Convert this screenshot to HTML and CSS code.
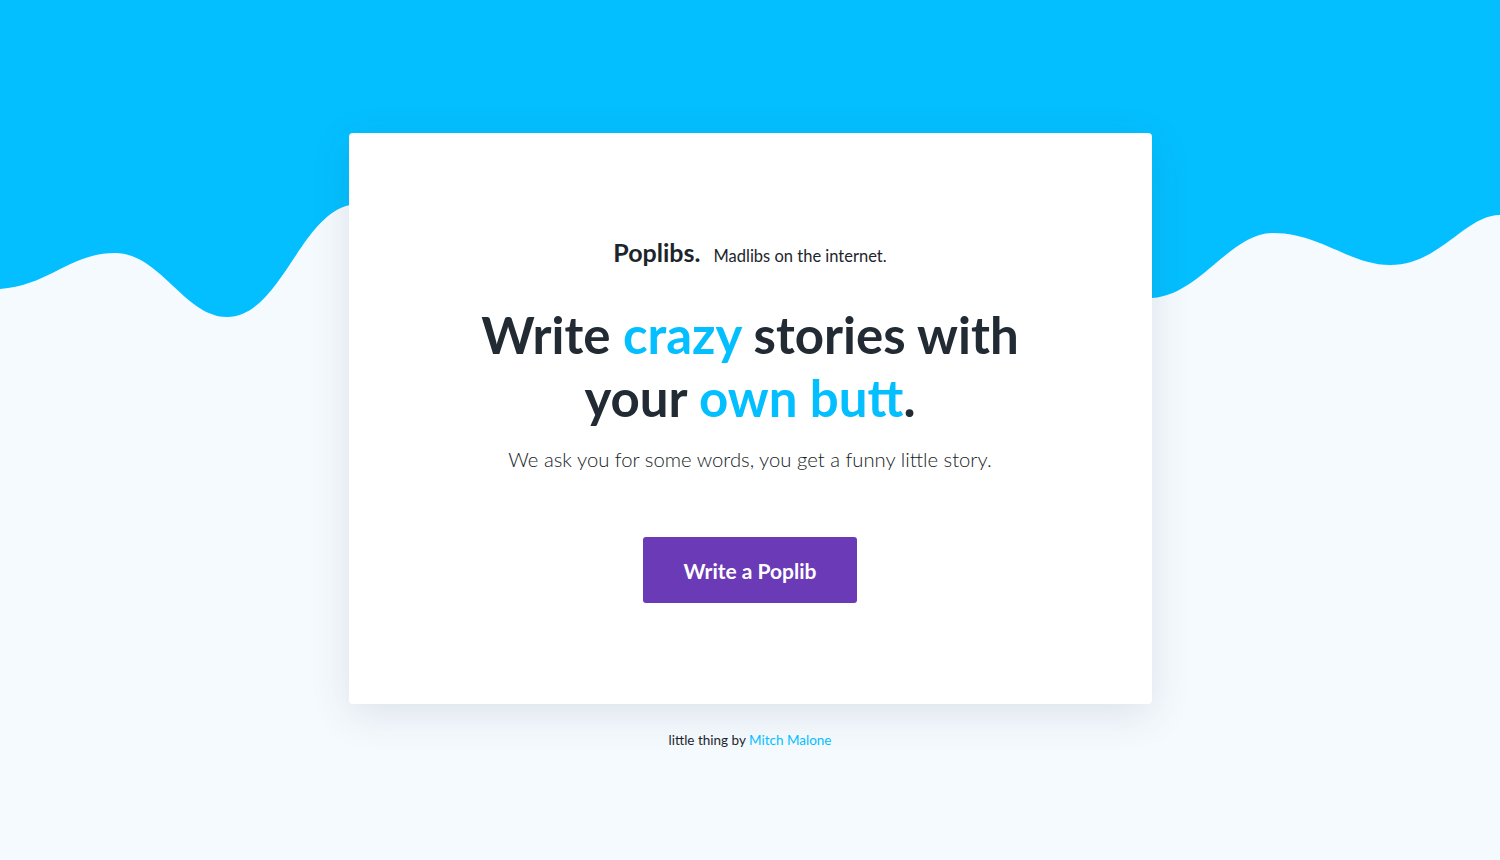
FILE: index.html
```html
<!DOCTYPE html>
<html lang="en">
<head>
<meta charset="utf-8">
<title>Poplibs</title>
<link rel="stylesheet" href="styles.css">
</head>
<body>
<svg class="wave" viewBox="0 0 1500 330" width="1500" height="330" preserveAspectRatio="none" aria-hidden="true">
  <path fill="#04BFFF" d="M0,0 L1500,0 L1500,215 C1465,215 1440,265 1390,265 C1350,265 1320,233 1273,233 C1230,233 1200,295 1152,298 C900,320 600,180 350,205 C300,215 280,317 227,317 C185,317 160,253 115,253 C70,253 50,285 0,289 Z"/>
</svg>
<main class="page">
  <section class="card">
    <div class="brand">
      <span class="brand-name">Poplibs.</span>
      <span class="brand-tag">Madlibs on the internet.</span>
    </div>
    <h1 class="headline">Write <span class="hl">crazy</span> stories with<br>your <span class="hl">own butt</span>.</h1>
    <p class="lede">We ask you for some words, you get a funny little story.</p>
    <a class="cta" href="#">Write a Poplib</a>
  </section>
  <p class="footer">little thing by <a href="#">Mitch Malone</a></p>
</main>
</body>
</html>
```

FILE: styles.css
```css
* { box-sizing: border-box; }
html, body { margin: 0; padding: 0; }
body {
  background: #F5FAFE;
  font-family: Lato, "Open Sans", sans-serif;
  color: #222b33;
  height: 860px;
  overflow: hidden;
  position: relative;
}
.wave {
  position: absolute;
  top: 0;
  left: 0;
  display: block;
}
.page {
  position: relative;
  display: flex;
  flex-direction: column;
  align-items: center;
  padding-top: 133px;
}
.card {
  width: 803px;
  height: 571px;
  background: #fff;
  border-radius: 4px;
  box-shadow: 0 10px 40px rgba(40, 60, 90, 0.12);
  display: flex;
  flex-direction: column;
  align-items: center;
  padding-top: 104px;
}
.brand {
  display: flex;
  align-items: baseline;
  gap: 13px;
}
.brand-name {
  font-weight: 700;
  font-size: 25px;
  color: #1d252c;
}
.brand-tag {
  font-size: 16.5px;
  color: #1d252c;
}
.headline {
  margin: 36px 0 0;
  font-size: 51px;
  line-height: 63px;
  font-weight: 700;
  text-align: center;
  color: #222b33;
}
.hl { color: #04BFFF; }
.lede {
  margin: 18px 0 0;
  font-size: 20.25px;
  font-weight: 300;
  color: #161d24;
}
.cta {
  margin-top: 66px;
  width: 214px;
  height: 66px;
  display: flex;
  align-items: center;
  justify-content: center;
  background: #6A3AB7;
  color: #fff;
  border-radius: 3px;
  font-size: 21px;
  font-weight: 700;
  text-decoration: none;
}
.footer {
  margin: 28px 0 0;
  font-size: 13.5px;
  color: #1d252c;
}
.footer a {
  color: #04BFFF;
  text-decoration: none;
}
```
